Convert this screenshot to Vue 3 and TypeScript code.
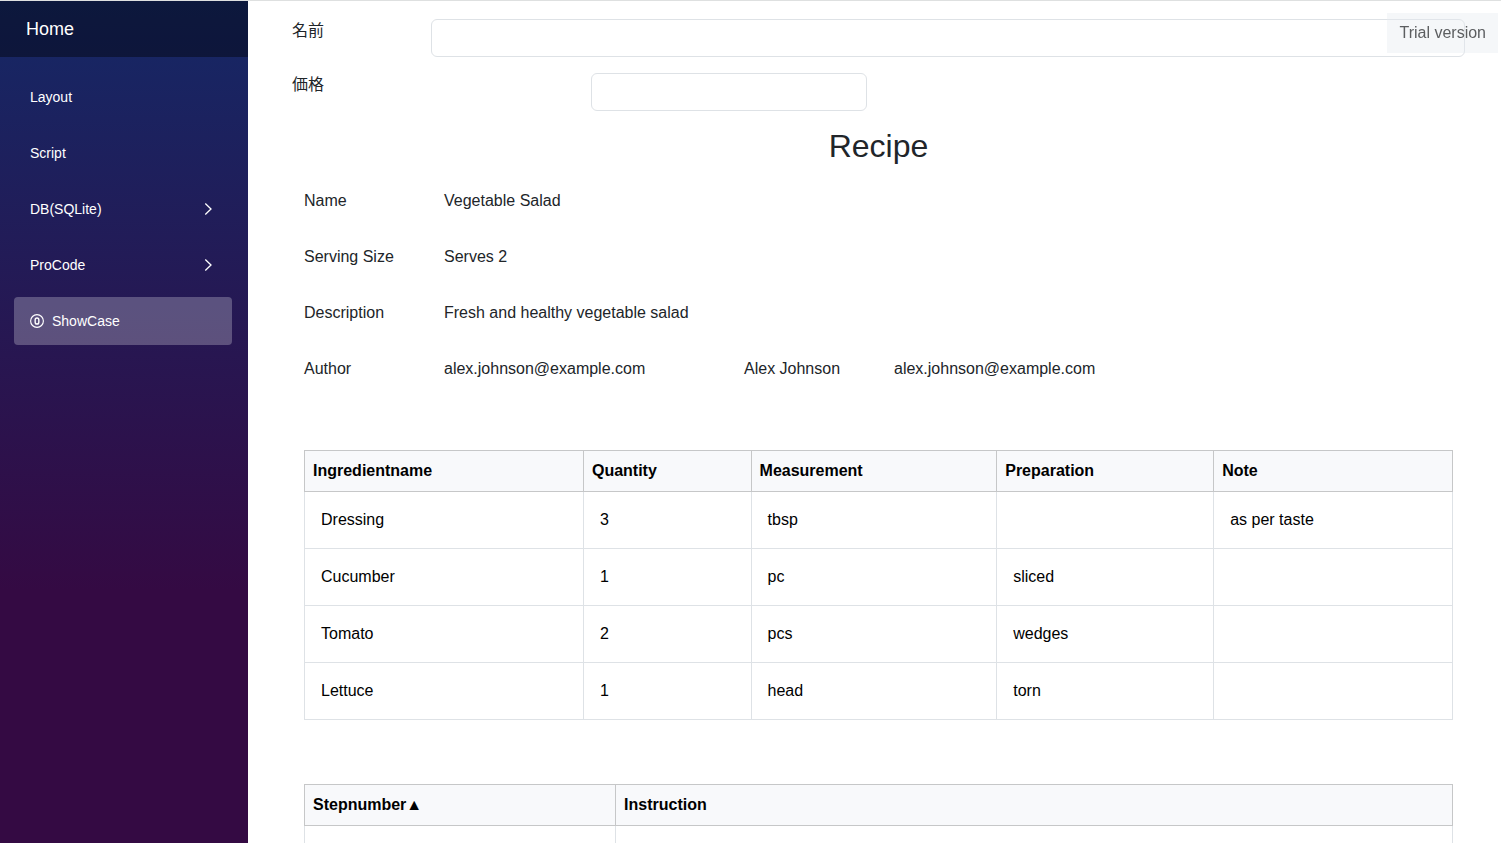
<script setup lang="ts">
import { ref } from 'vue'

interface NavItem { label: string; expandable?: boolean; active?: boolean }
const navItems: NavItem[] = [
  { label: 'Layout' },
  { label: 'Script' },
  { label: 'DB(SQLite)', expandable: true },
  { label: 'ProCode', expandable: true },
  { label: 'ShowCase', active: true },
]

const itemName = ref('')
const price = ref('')

const details: { label: string; values: string[] }[] = [
  { label: 'Name', values: ['Vegetable Salad'] },
  { label: 'Serving Size', values: ['Serves 2'] },
  { label: 'Description', values: ['Fresh and healthy vegetable salad'] },
  { label: 'Author', values: ['alex.johnson@example.com', 'Alex Johnson', 'alex.johnson@example.com'] },
]

const ingredientColumns = ['Ingredientname', 'Quantity', 'Measurement', 'Preparation', 'Note']
const ingredients: string[][] = [
  ['Dressing', '3', 'tbsp', '', 'as per taste'],
  ['Cucumber', '1', 'pc', 'sliced', ''],
  ['Tomato', '2', 'pcs', 'wedges', ''],
  ['Lettuce', '1', 'head', 'torn', ''],
]
</script>

<template>
  <div class="app">
    <aside class="sidebar">
      <div class="brand-bar"><a class="brand" href="#">Home</a></div>
      <nav class="nav">
        <a v-for="item in navItems" :key="item.label" href="#" class="nav-link" :class="{ active: item.active }">
          <svg v-if="item.active" class="nav-icon" viewBox="0 0 16 16" aria-hidden="true">
            <circle cx="8" cy="8" r="7.3" />
            <rect x="5.9" y="4.6" width="4.2" height="6.8" rx="2.1" stroke-width="1.6" />
          </svg>
          <span>{{ item.label }}</span>
          <svg v-if="item.expandable" class="chevron" viewBox="0 0 16 16" aria-hidden="true">
            <path d="M5.3 2.5 L11 8 L5.3 13.5" />
          </svg>
        </a>
      </nav>
    </aside>

    <main class="content">
      <form class="form" @submit.prevent>
        <div class="form-row">
          <label for="item-name">名前</label>
          <input id="item-name" v-model="itemName" class="wide" type="text" />
        </div>
        <div class="form-row">
          <label for="item-price">価格</label>
          <input id="item-price" v-model="price" class="short" type="text" />
        </div>
      </form>

      <section class="recipe">
        <h1>Recipe</h1>
        <dl class="details">
          <div v-for="row in details" :key="row.label" class="detail-row">
            <dt>{{ row.label }}</dt>
            <dd v-for="(value, i) in row.values" :key="i">{{ value }}</dd>
          </div>
        </dl>

        <table class="ingredients">
          <colgroup>
            <col class="c-name" /><col class="c-qty" /><col class="c-measure" /><col class="c-prep" /><col />
          </colgroup>
          <thead>
            <tr><th v-for="column in ingredientColumns" :key="column" scope="col">{{ column }}</th></tr>
          </thead>
          <tbody>
            <tr v-for="row in ingredients" :key="row[0]">
              <td v-for="(cell, i) in row" :key="i">{{ cell }}</td>
            </tr>
          </tbody>
        </table>

        <table class="steps">
          <colgroup><col class="c-step" /><col /></colgroup>
          <thead>
            <tr><th scope="col">Stepnumber▲</th><th scope="col">Instruction</th></tr>
          </thead>
          <tbody>
            <tr><td></td><td></td></tr>
          </tbody>
        </table>
      </section>
    </main>

    <div class="trial">Trial version</div>
  </div>
</template>

<style>
body {
  margin: 0;
}
</style>

<style scoped>
* {
  box-sizing: border-box;
}
.app {
  display: flex;
  height: 100vh;
  overflow: hidden;
  border-top: 1px solid #dee0e0;
  background: #fff;
  color: #212529;
  font-family: "Liberation Sans", "Noto Sans CJK JP", sans-serif;
  font-size: 16px;
  line-height: 24px;
}
.sidebar {
  flex: 0 0 248px;
  background: linear-gradient(180deg, #152866 0%, #340a43 70%);
}
.brand-bar {
  display: flex;
  align-items: center;
  height: 56px;
  padding: 0 26px;
  background: rgba(0, 0, 0, 0.4);
}
.brand {
  color: #fff;
  font-size: 18px;
  text-decoration: none;
}
.nav {
  display: flex;
  flex-direction: column;
  gap: 8px;
  padding: 16px 16px 16px 14px;
}
.nav-link {
  display: flex;
  align-items: center;
  gap: 8px;
  height: 48px;
  padding: 0 16px;
  border-radius: 4px;
  color: #fff;
  font-size: 14px;
  text-decoration: none;
}
.nav-link.active {
  background: rgba(255, 255, 255, 0.25);
}
.nav-icon,
.chevron {
  fill: none;
  stroke: currentColor;
}
.nav-icon {
  width: 14px;
  height: 14px;
  stroke-width: 1.3;
}
.chevron {
  width: 16px;
  height: 16px;
  margin-left: auto;
  stroke-width: 1.3;
}
.content {
  flex: 1;
  min-width: 0;
  padding: 18px 36px 0 44px;
}
.form {
  display: flex;
  flex-direction: column;
  gap: 16px;
}
.form-row {
  display: flex;
}
.form-row label {
  flex: 0 0 139px;
}
.form-row input {
  height: 38px;
  padding: 6px 12px;
  border: 1px solid #dee2e6;
  border-radius: 6px;
  background: #fff;
  color: inherit;
  font: inherit;
}
.wide {
  flex: 1;
  min-width: 0;
}
.short {
  width: 276px;
  margin-left: 160px;
}
.recipe {
  padding: 16px 12px 0;
}
h1 {
  margin: 0;
  font-size: 32px;
  font-weight: 400;
  line-height: 38px;
  text-align: center;
}
.details {
  display: flex;
  flex-direction: column;
  gap: 32px;
  margin: 24px 0 69px;
}
.detail-row {
  display: grid;
  grid-template-columns: 140px 300px 150px 1fr;
}
.detail-row dt,
.detail-row dd {
  margin: 0;
  white-space: nowrap;
}
table {
  width: 100%;
  border-collapse: collapse;
  table-layout: fixed;
  color: #000;
  text-align: left;
}
.ingredients {
  margin-bottom: 64px;
}
th {
  height: 41px;
  padding: 8px;
  border: 1px solid #c6c7c8;
  background: #f8f9fb;
  font-weight: 700;
}
td {
  height: 57px;
  padding: 16px;
  border: 1px solid #dee2e6;
}
.c-name {
  width: 24.3%;
}
.c-qty {
  width: 14.6%;
}
.c-measure {
  width: 21.4%;
}
.c-prep {
  width: 18.9%;
}
.c-step {
  width: 27.1%;
}
.trial {
  position: fixed;
  top: 13px;
  right: 3px;
  padding: 8px 12px;
  background: rgba(230, 234, 240, 0.4);
  color: #5c5e60;
}
</style>
